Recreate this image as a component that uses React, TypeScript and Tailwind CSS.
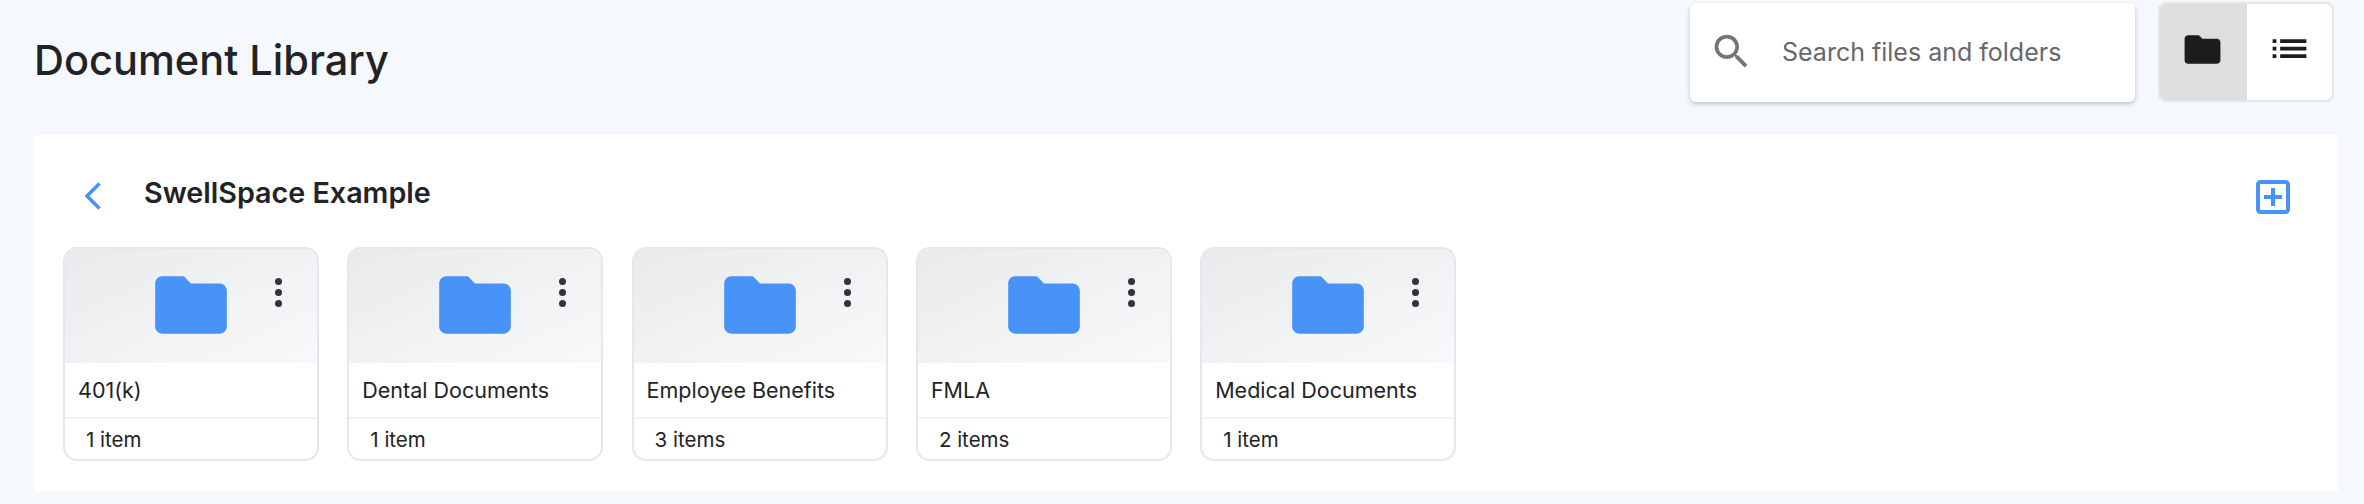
const FOLDER = "M10 4H4c-1.1 0-1.99.9-1.99 2L2 18c0 1.1.9 2 2 2h16c1.1 0 2-.9 2-2V8c0-1.1-.9-2-2-2h-8l-2-2z";

const folders = [
  { name: "401(k)", count: "1 item" },
  { name: "Dental Documents", count: "1 item" },
  { name: "Employee Benefits", count: "3 items" },
  { name: "FMLA", count: "2 items" },
  { name: "Medical Documents", count: "1 item" },
];

function FolderCard({ name, count }: { name: string; count: string }) {
  return (
    <div className="w-[256px] h-[214px] shrink-0 rounded-[14px] border-2 border-[#e6e7ea] bg-white overflow-hidden flex flex-col">
      <div className="h-[114px] shrink-0 bg-gradient-to-br from-[#e9eaec] to-[#f8f9fa] flex items-start">
        <svg viewBox="0 0 24 24" className="w-[86px] h-[86px] ml-[83px] mt-[13px] shrink-0" fill="#4893f7">
          <path d={FOLDER} />
        </svg>
        <div className="ml-[41px] mt-[29px] flex flex-col gap-[4px]">
          <span className="block w-[7px] h-[7px] rounded-full bg-[#333438]" />
          <span className="block w-[7px] h-[7px] rounded-full bg-[#333438]" />
          <span className="block w-[7px] h-[7px] rounded-full bg-[#333438]" />
        </div>
      </div>
      <div className="h-[56px] shrink-0 border-b-2 border-[#f0f1f3] pl-[13px] flex items-center text-[21.5px] text-[#222326]">
        {name}
      </div>
      <div className="flex-1 pl-[21px] pt-[2px] flex items-center text-[20.5px] text-[#222326]">{count}</div>
    </div>
  );
}

export default function App() {
  return (
    <div className="w-[2364px] h-[504px] bg-[#f5f8fc] flex flex-col overflow-hidden font-['Inter',sans-serif]">
      <header className="h-[135px] shrink-0 flex items-start pl-[34px] pr-[30px] pt-[2px]">
        <h1 className="mt-[33px] text-[41.5px] leading-[50px] font-medium text-[#222326]">Document Library</h1>
        <div className="ml-auto mt-[1px] w-[445px] h-[99px] rounded-[6px] bg-white shadow-[0_2px_5px_rgba(0,0,0,0.22)] flex items-center pl-[19px]">
          <svg viewBox="0 0 24 24" className="w-[45px] h-[45px] mb-[3px] shrink-0" fill="#757575">
            <path d="M15.5 14h-.79l-.28-.27C15.41 12.59 16 11.11 16 9.5 16 5.91 13.09 3 9.5 3S3 5.91 3 9.5 5.91 16 9.5 16c1.61 0 3.09-.59 4.23-1.57l.27.28v.79l5 4.99L20.49 19l-4.99-5zm-6 0C7.01 14 5 11.99 5 9.5S7.01 5 9.5 5 14 7.01 14 9.5 11.99 14 9.5 14z" />
          </svg>
          <span className="ml-[28px] mt-[1px] text-[25px] text-[#66676b]">Search files and folders</span>
        </div>
        <div className="ml-[23px] w-[176px] h-[100px] rounded-[8px] border-2 border-[#e5e6e9] overflow-hidden flex bg-white">
          <div className="w-[87px] bg-[#dedede] flex items-center justify-center">
            <svg viewBox="0 0 24 24" className="w-[43px] h-[43px] mb-[5px] mr-[2px]" fill="#1c1c1c">
              <path d={FOLDER} />
            </svg>
          </div>
          <div className="flex-1 flex items-center justify-center">
            <svg viewBox="0 0 24 24" className="w-[45px] h-[45px] mb-[7px]" fill="#1c1c1c">
              <path d="M3 13h2v-2H3v2zm0 4h2v-2H3v2zm0-8h2V7H3v2zm4 4h14v-2H7v2zm0 4h14v-2H7v2zM7 7v2h14V7H7z" />
            </svg>
          </div>
        </div>
      </header>
      <main className="h-[356px] shrink-0 ml-[34px] mr-[26px] bg-white flex flex-col pl-[29px] pr-[48px]">
        <div className="h-[112px] shrink-0 flex items-center pt-[6px]">
          <svg viewBox="0 0 16 28" className="w-[16px] h-[28px] ml-[22px] mt-[4px] shrink-0" fill="none" stroke="#4893f7" strokeWidth="3.5">
            <path d="M14.5 1.5 2 14l12.5 12.5" />
          </svg>
          <h2 className="ml-[43px] mb-[2px] text-[28.7px] font-semibold text-[#222326]">SwellSpace Example</h2>
          <svg viewBox="0 0 34 34" className="w-[34px] h-[34px] ml-auto mt-[5px] shrink-0" fill="none" stroke="#4893f7" strokeWidth="4">
            <rect x="2" y="2" width="30" height="30" rx="2.5" />
            <path d="M17 8v18M8 17h18" />
          </svg>
        </div>
        <div className="flex gap-[28.3px]">
          {folders.map((f) => (
            <FolderCard key={f.name} name={f.name} count={f.count} />
          ))}
        </div>
      </main>
    </div>
  );
}
